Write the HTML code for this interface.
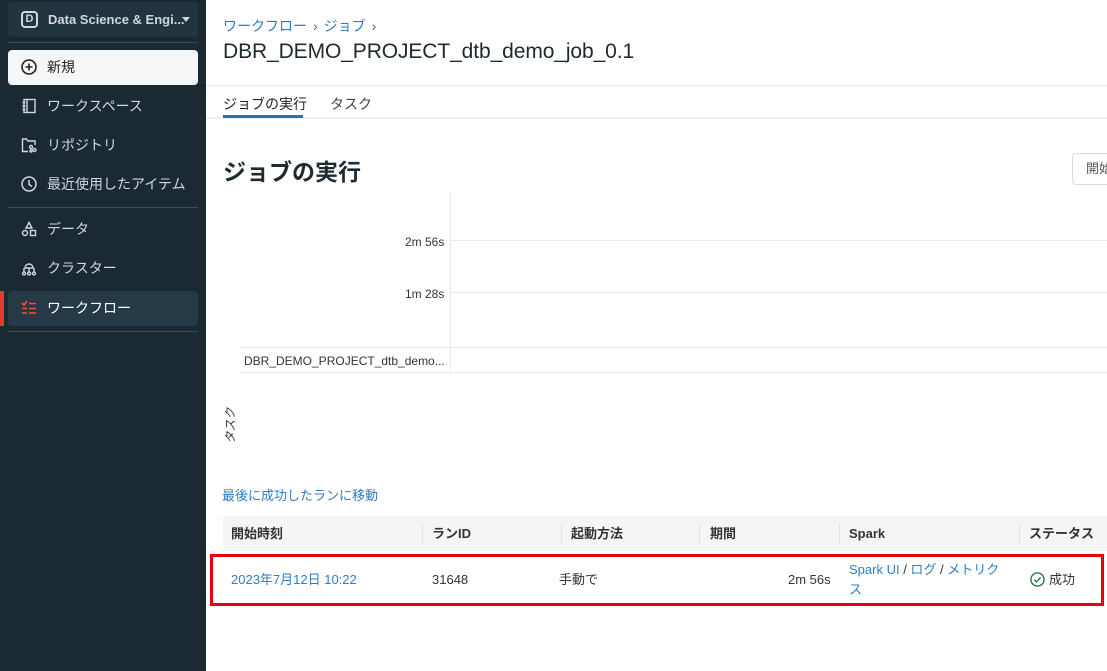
<!DOCTYPE html>
<html><head><meta charset="utf-8"><style>
*{margin:0;padding:0;box-sizing:border-box}
body{width:1107px;height:671px;overflow:hidden;background:#fff;font-family:"Liberation Sans","Noto Sans CJK JP",sans-serif;position:relative;color:#222}
.sb{position:absolute;left:0;top:0;width:206px;height:671px;background:#1b2a32}
.ws{position:absolute;left:8px;top:2px;width:190px;height:35px;background:#22343d;border-radius:4px;color:#cfd8dc;font-size:13px;font-weight:bold;line-height:35px;padding-left:40px;white-space:nowrap}
.ws .d{position:absolute;left:13px;top:9px;width:17px;height:17px;border:2px solid #cfd8dc;border-radius:4px;font-size:11px;line-height:13px;text-align:center}
.ws .ar{position:absolute;right:8px;top:15px;border:4px solid transparent;border-top:5px solid #cfd8dc}
.hr{position:absolute;left:8px;width:190px;height:1px;background:#3a4b54}
.it{position:absolute;left:8px;width:190px;height:35px;color:#cfd8dc;font-size:14px;line-height:35px;padding-left:39px}
.it svg{position:absolute;left:13px;top:9px}
.new{background:#f5f6f7;color:#222;border-radius:4px}
.act{background:#253a44;color:#fff;border-radius:4px}
.red{position:absolute;left:0;top:291px;width:4px;height:35px;background:#e8382e}
.bc{position:absolute;left:223px;top:16px;font-size:14px;color:#2f7cc4}
.bc span{color:#666;margin:0 6px}
h1{position:absolute;left:223px;top:40px;font-size:21px;font-weight:normal;color:#1e2a31;letter-spacing:-0.1px}
.tabline{position:absolute;left:206px;top:85px;width:901px;height:1px;background:#e3e6e8}
.tabs{position:absolute;left:206px;top:117px;width:901px;height:2px;background:#eef1f3}
.t1{position:absolute;left:223px;top:94px;font-size:14px;color:#222}
.t1u{position:absolute;left:223px;top:115px;width:80px;height:3px;background:#2272b4}
.t2{position:absolute;left:330px;top:94px;font-size:14px;color:#444}
h2{position:absolute;left:223px;top:153px;font-size:23px;font-weight:bold;color:#1e2a31}
.btn{position:absolute;left:1072px;top:153px;width:60px;height:32px;border:1px solid #d4dce2;border-radius:4px;font-size:13px;line-height:30px;padding-left:13px;color:#555}
.gl{position:absolute;background:#e4ebf1}
.lab{position:absolute;font-size:12px;color:#333;white-space:nowrap}
.tbl{position:absolute;left:223px;top:516px;width:884px;height:35px;background:#f3f5f6;font-size:13px;font-weight:bold;color:#333}
.tbl div{position:absolute;top:8px;line-height:20px;height:20px}
.sep{position:absolute;top:8px;width:1px;height:20px;background:#dfe3e6}
.row{position:absolute;left:210px;top:554px;width:894px;height:52px;border:3px solid #e8000b}
.row div{position:absolute;font-size:13px;color:#333;line-height:20px;top:13px}
a{color:#2f7cc4;text-decoration:none}
</style></head><body>
<div class="sb">
<div class="ws"><div class="d">D</div>Data Science &amp; Engi...<div class="ar"></div></div>
<div class="hr" style="top:42px"></div>
<div class="it new" style="top:50px"><svg width="16" height="16" viewBox="0 0 16 16"><circle cx="8" cy="8" r="7" fill="none" stroke="#222" stroke-width="1.6"/><path d="M8 4.5v7M4.5 8h7" stroke="#222" stroke-width="1.6"/></svg>新規</div>
<div class="it" style="top:89px"><svg width="16" height="16" viewBox="0 0 16 16" fill="none" stroke="#cfd8dc" stroke-width="1.4"><rect x="3" y="1.5" width="11" height="13"/><path d="M6 1.5v13M1.5 4.5h3M1.5 8h3M1.5 11.5h3"/></svg>ワークスペース</div>
<div class="it" style="top:128px"><svg width="16" height="16" viewBox="0 0 16 16" fill="none" stroke="#cfd8dc" stroke-width="1.4"><path d="M7 14.5H1.5V2h4l1.5 2h7v4"/><circle cx="10" cy="10" r="1.5"/><circle cx="13.5" cy="13" r="1.5"/><circle cx="10" cy="14" r="1"/></svg>リポジトリ</div>
<div class="it" style="top:167px"><svg width="16" height="16" viewBox="0 0 16 16" fill="none" stroke="#cfd8dc" stroke-width="1.5"><circle cx="8" cy="8" r="7"/><path d="M8 4v4.5l3 2"/></svg>最近使用したアイテム</div>
<div class="hr" style="top:207px"></div>
<div class="it" style="top:212px"><svg width="16" height="16" viewBox="0 0 16 16" fill="none" stroke="#cfd8dc" stroke-width="1.4"><path d="M8 1.5L11 7H5z"/><circle cx="4" cy="12" r="2.5"/><rect x="9.5" y="9.5" width="5" height="5"/></svg>データ</div>
<div class="it" style="top:251px"><svg width="16" height="16" viewBox="0 0 16 16" fill="none" stroke="#cfd8dc" stroke-width="1.4"><path d="M4 8a4 4 0 0 1 8 0zM8 8v4M3 8v4M13 8v4"/><circle cx="3" cy="13.5" r="1.5"/><circle cx="8" cy="13.5" r="1.5"/><circle cx="13" cy="13.5" r="1.5"/></svg>クラスター</div>
<div class="it act" style="top:291px"><svg width="16" height="16" viewBox="0 0 16 16" fill="none" stroke="#ff4b3e" stroke-width="1.6"><path d="M1 3l2 2 3-4M8 3.5h7M1 8.5h5M8 8.5h7M1 13h5M8 13h7"/></svg>ワークフロー</div>
<div class="red"></div>
<div class="hr" style="top:331px"></div>
</div>
<div class="bc">ワークフロー<span>›</span>ジョブ<span>›</span></div>
<h1>DBR_DEMO_PROJECT_dtb_demo_job_0.1</h1>
<div class="tabline"></div>
<div class="t1">ジョブの実行</div><div class="t2">タスク</div>
<div class="tabs"></div><div class="t1u"></div>
<h2>ジョブの実行</h2>
<div class="btn">開始</div>
<div class="gl" style="left:450px;top:193px;width:1px;height:180px"></div>
<div class="gl" style="left:450px;top:240px;width:657px;height:1px"></div>
<div class="gl" style="left:450px;top:292px;width:657px;height:1px"></div>
<div class="gl" style="left:240px;top:347px;width:867px;height:1px"></div>
<div class="gl" style="left:240px;top:372px;width:867px;height:1px"></div>
<div class="lab" style="left:405px;top:235px">2m 56s</div>
<div class="lab" style="left:405px;top:287px">1m 28s</div>
<div class="lab" style="left:244px;top:354px">DBR_DEMO_PROJECT_dtb_demo...</div>
<div class="lab" style="left:208px;top:417px;transform:rotate(-90deg);width:44px;text-align:center;font-style:italic">タスク</div>
<div style="position:absolute;left:222px;top:485px;font-size:13px;color:#2f7cc4">最後に成功したランに移動</div>
<div class="tbl">
<div style="left:8px">開始時刻</div><span class="sep" style="left:199px"></span>
<div style="left:209px">ランID</div><span class="sep" style="left:338px"></span>
<div style="left:348px">起動方法</div><span class="sep" style="left:476px"></span>
<div style="left:487px">期間</div><span class="sep" style="left:616px"></span>
<div style="left:626px">Spark</div><span class="sep" style="left:796px"></span>
<div style="left:806px">ステータス</div>
</div>
<div class="row">
<div style="left:18px"><a>2023年7月12日 10:22</a></div>
<div style="left:219px">31648</div>
<div style="left:346px">手動で</div>
<div style="left:575px">2m 56s</div>
<div style="left:636px;top:3px;width:160px"><a>Spark UI</a> / <a>ログ</a> / <a>メトリクス</a></div>
<div style="left:817px"><svg width="15" height="15" viewBox="0 0 16 16" style="vertical-align:-3px;margin-right:4px" fill="none" stroke="#277c43" stroke-width="1.5"><circle cx="8" cy="8" r="7"/><path d="M4.5 8.2l2.3 2.3 4.5-4.8"/></svg>成功</div>
</div>
</body></html>
